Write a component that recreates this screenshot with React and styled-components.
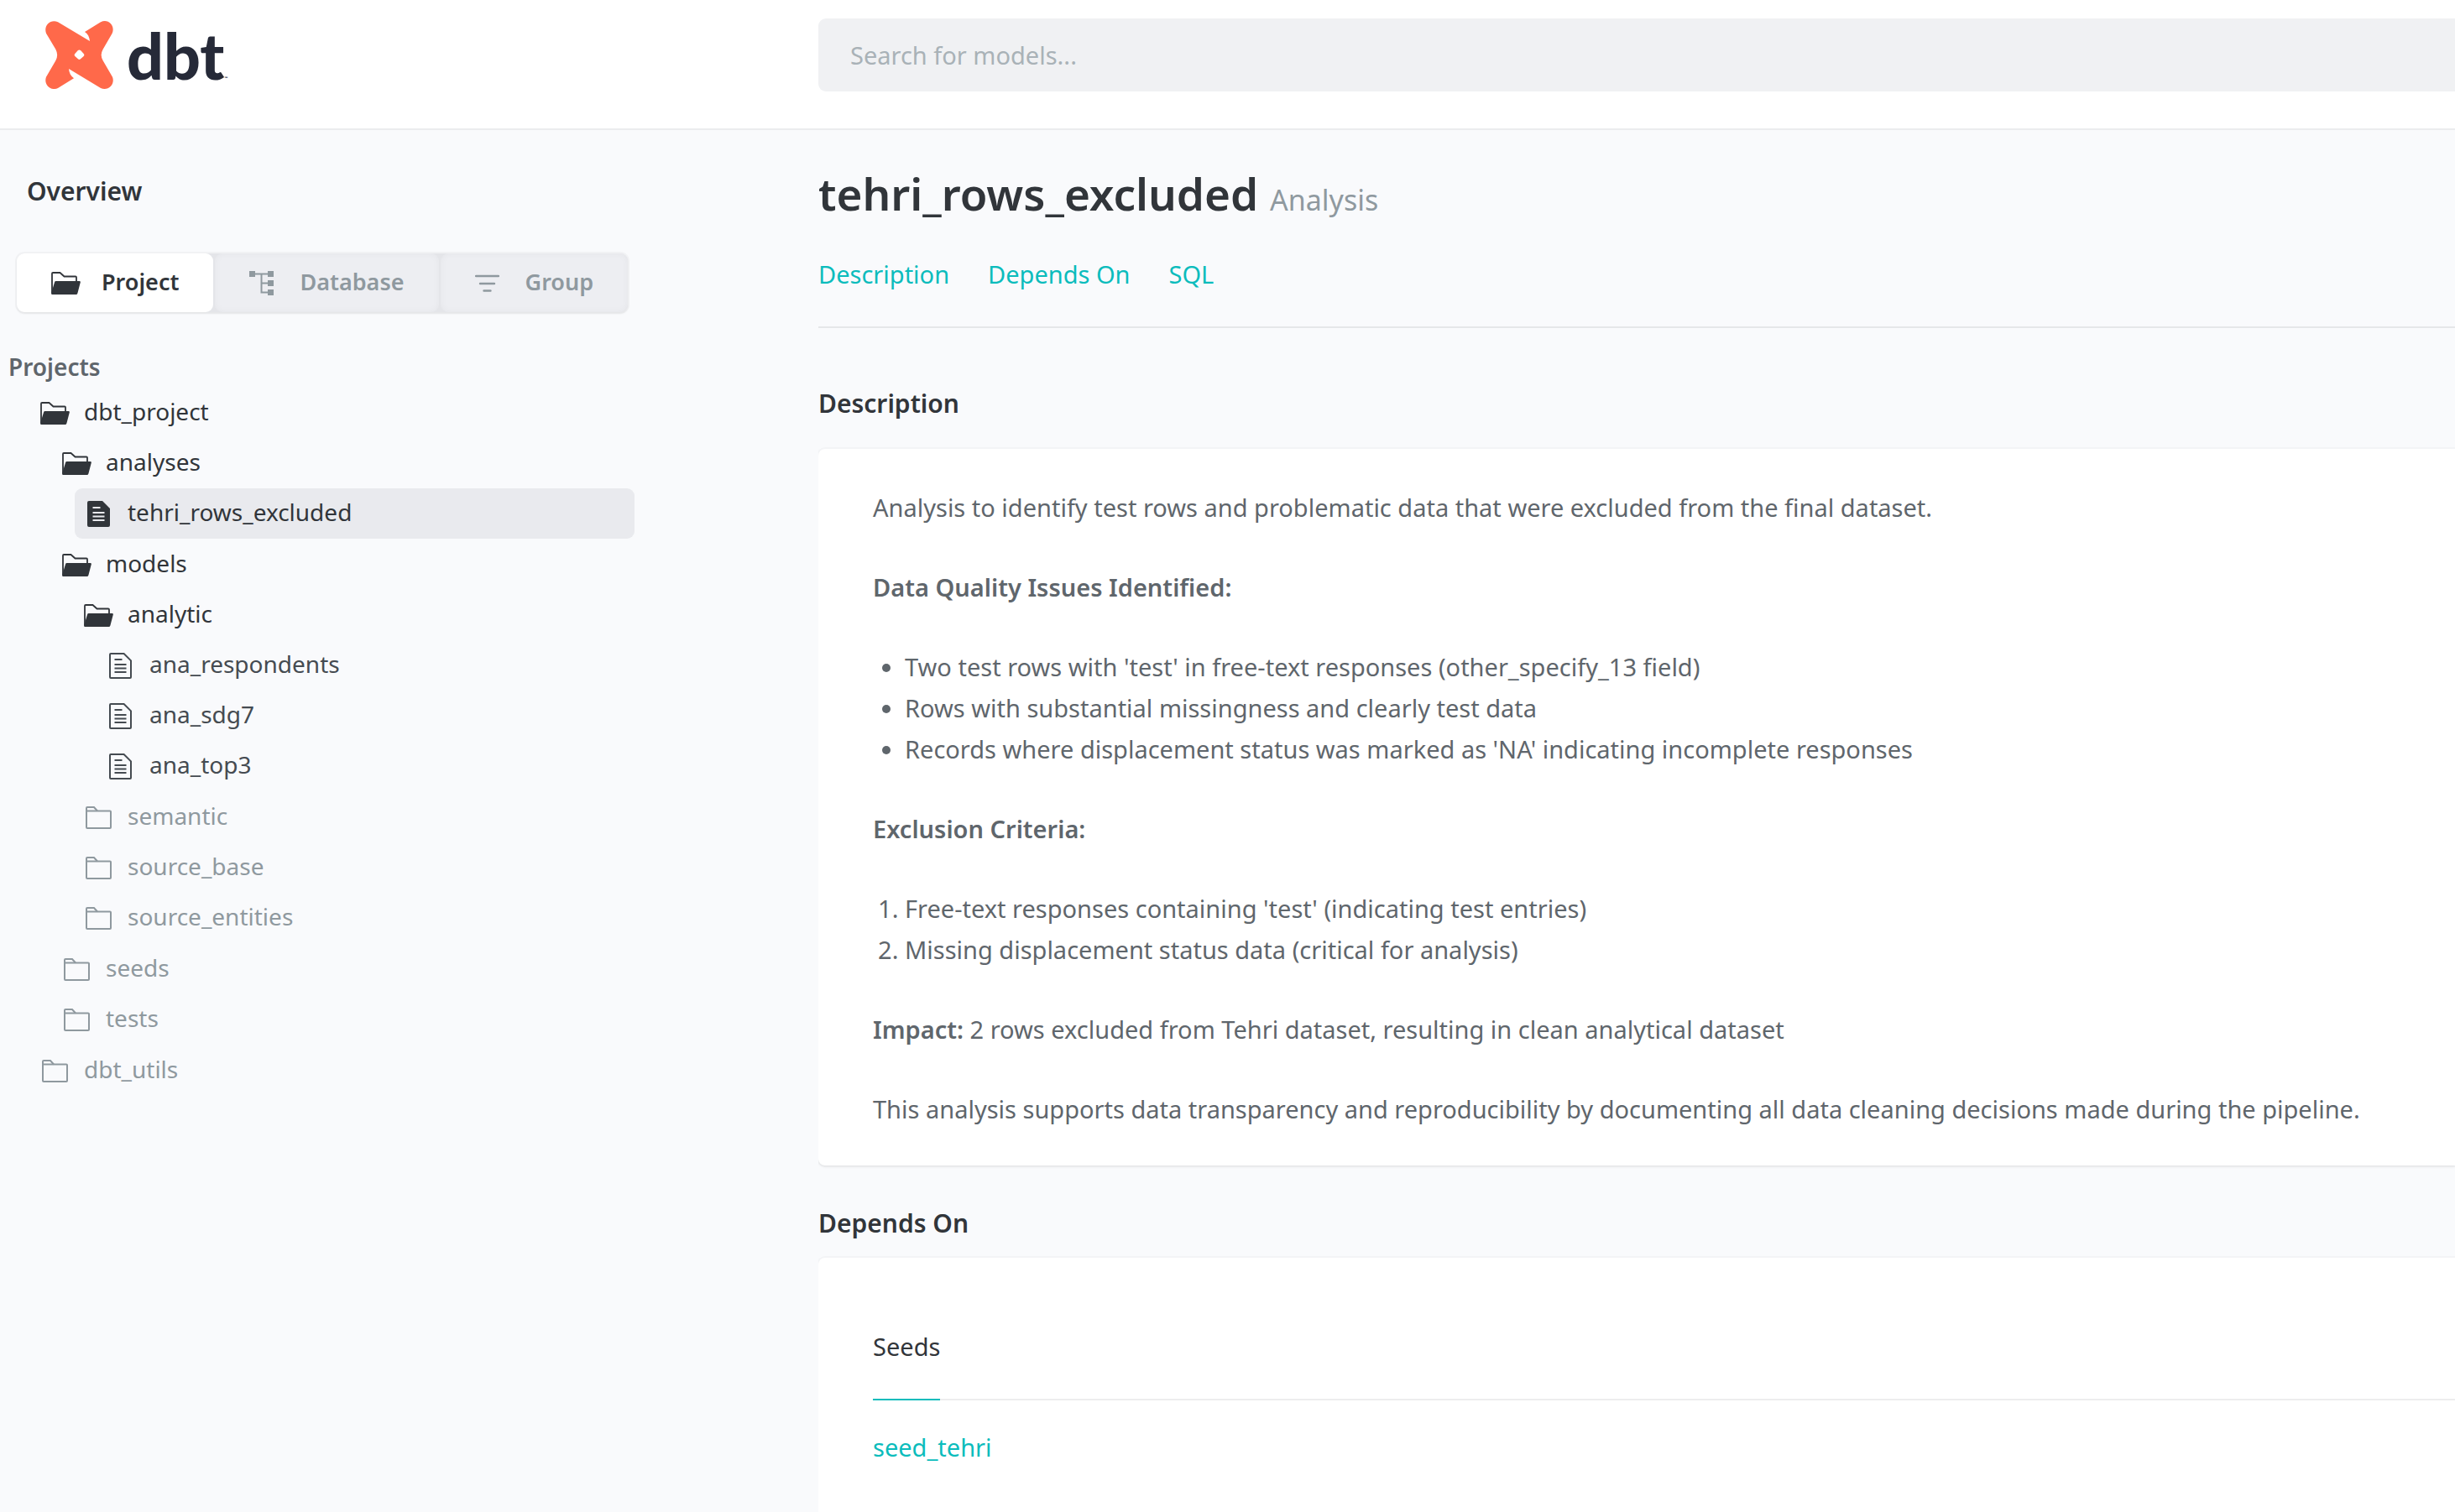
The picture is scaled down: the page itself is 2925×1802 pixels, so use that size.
import React from "react";
import styled, { createGlobalStyle } from "styled-components";

const color = {
  ink: "#31353a",
  body: "#5f666c",
  muted: "#8f999f",
  teal: "#0bbcbc",
  page: "#f9fafc",
  line: "#ebecee",
};

const GlobalStyle = createGlobalStyle`
  *, *::before, *::after { box-sizing: border-box; }
  body {
    margin: 0;
    background: ${color.page};
    color: ${color.body};
    font: 400 29px/49px "Noto Sans", "Open Sans", sans-serif;
  }
  h1, h2, h3, p, ul, ol { margin: 0; }
  a { color: ${color.teal}; text-decoration: none; }
  strong { font-weight: 600; }
`;

/* ---------- frame ---------- */

const Shell = styled.div`
  display: flex;
  flex-direction: column;
  height: 100vh;
  overflow: hidden;
`;

const Columns = styled.div`
  display: grid;
  grid-template-columns: minmax(0, 1fr) minmax(0, 2fr);
`;

const TopBar = styled(Columns).attrs({ as: "header" })`
  flex: none;
  height: 155px;
  background: #fff;
  border-bottom: 2px solid ${color.line};
`;

const Body = styled(Columns)`
  flex: 1;
  min-height: 0;
`;

const Brand = styled.a`
  display: flex;
  align-items: center;
  align-self: start;
  gap: 16px;
  height: 81px;
  margin: 25px 0 0 54px;
  color: #262a38;
`;

const Wordmark = styled.span`
  font: 900 77px/81px Lato, sans-serif;
  small {
    font-size: 5px;
    line-height: 1;
  }
`;

const Search = styled.input`
  width: 100%;
  height: 87px;
  margin-top: 22px;
  padding: 0 38px;
  border: 0;
  border-radius: 9px 0 0 9px;
  background: #f0f1f3;
  color: ${color.ink};
  font: 400 29px "Noto Sans", "Open Sans", sans-serif;
  &::placeholder {
    color: #a9b2b7;
    opacity: 1;
  }
`;

/* ---------- sidebar ---------- */

const Sidebar = styled.aside`
  padding-top: 48px;
  min-height: 0;
  overflow: hidden;
`;

const Overview = styled.a`
  display: block;
  padding-left: 32px;
  color: ${color.ink};
  font-size: 30px;
  font-weight: 600;
`;

const Tabs = styled.div`
  display: flex;
  width: max-content;
  margin: 50px 0 0 20px;
  border-radius: 9px;
  background: #e4e5e9;
  box-shadow: 0 0 0 2px rgba(0, 0, 0, 0.03), 0 2px 3px rgba(0, 0, 0, 0.05);
`;

const Tab = styled.button`
  display: flex;
  align-items: center;
  gap: 25px;
  height: 70px;
  padding: 0 41px;
  border: 0;
  border-radius: 9px;
  background: ${(p) => (p.$active ? "#fff" : "#edeef2")};
  box-shadow: ${(p) => (p.$active ? "none" : "inset 0 0 8px rgba(0, 0, 0, 0.04)")};
  color: ${(p) => (p.$active ? color.ink : color.muted)};
  font: 600 27px "Noto Sans", "Open Sans", sans-serif;
  & + & {
    margin-left: 2px;
  }
`;

const TabIcon = styled.span`
  display: flex;
  width: 35px;
`;

const Label = styled.span`
  padding-bottom: 4px;
`;

const TreeTitle = styled.h2`
  padding-left: 10px;
  margin-top: 41px;
  font-size: 28px;
  font-weight: 600;
`;

const TreeList = styled.ul`
  list-style: none;
  padding: 0 0 0 ${(p) => (p.$root ? 37 : 26)}px;
  margin-bottom: 1px;
`;

const TreeRow = styled.a`
  display: flex;
  align-items: center;
  gap: 17px;
  height: 60px;
  padding-left: 10px;
  border-radius: 9px;
  background: ${(p) => (p.$selected ? "#e9eaee" : "transparent")};
  color: ${(p) => p.$tone};
  font-size: 28px;
`;

const IconSlot = styled.span`
  display: flex;
  justify-content: center;
  width: 36px;
`;

const TreeNav = styled.nav`
  width: 756px;
  max-width: 100%;
`;

/* ---------- main ---------- */

const Main = styled.main`
  padding-top: 40px;
  min-height: 0;
  overflow: hidden;
`;

const Title = styled.h1`
  color: ${color.ink};
  font-size: 53px;
  font-weight: 600;
  line-height: 72px;
  small {
    color: ${color.muted};
    font-size: 34px;
    font-weight: 400;
    line-height: 1;
  }
`;

const Anchors = styled.nav`
  display: flex;
  gap: 46px;
  margin-top: 35px;
  padding-bottom: 38px;
  border-bottom: 2px solid #e5e7e9;
`;

const Section = styled.section`
  display: flex;
  flex-direction: column;
  gap: ${(p) => p.$gap}px;
  padding-top: ${(p) => p.$top}px;
`;

const SectionTitle = styled.h2`
  color: ${color.ink};
  font-size: 30px;
  font-weight: 600;
`;

const Card = styled.div`
  display: flex;
  flex-direction: column;
  gap: ${(p) => p.$gap}px;
  padding: ${(p) => p.$top}px 0 43px 65px;
  border-radius: 8px 0 0 8px;
  background: #fff;
  box-shadow: 0 0 0 2px rgba(0, 0, 0, 0.025), 0 2px 3px rgba(0, 0, 0, 0.06);
  ul, ol { padding-left: 38px; }
`;

const TabStrip = styled.div`
  display: flex;
  border-bottom: 2px solid #ededee;
`;

const StripTab = styled.button`
  padding: 0 0 38px;
  margin-bottom: -2px;
  border: 0;
  border-bottom: 2px solid ${color.teal};
  background: none;
  color: ${color.ink};
  font: inherit;
`;

/* ---------- drawings ---------- */

const Mark = () => (
  <svg width="81" height="81" viewBox="162 75 243 243" aria-hidden="true">
    <path
      fill="#ff694a"
      fillRule="evenodd"
      d="M207 79L321 147C320 133 314 121 303 114L360 79C386 65 413 92 401 119L368 176Q356 197 368 217L402 275C412 302 387 326 360 315L246 246C247 260 253 272 264 280L207 315C181 327 155 302 165 275L199 217Q210 197 199 176L165 119C155 92 180 67 207 79ZM278 181L268 192Q264 197 268 201L279 211Q283 215 288 211L299 201Q303 197 299 192L289 181Q283 176 278 181Z"
    />
  </svg>
);

const FolderOpen = () => (
  <svg width="35" height="27" viewBox="0 0 35 27" aria-hidden="true">
    <path d="M1 25V2Q1 1 2 1H10.5L15.5 5.5H29Q30 5.5 30 6.5V12" fill="none" stroke="currentColor" strokeWidth="1.8" />
    <path d="M5.6 11H33.5Q35.2 11 34.8 12.6L31.4 25.4Q31 27 29.6 27H1.4Q0 27 0 25.5L4 12.4Q4.4 11 5.6 11Z" fill="currentColor" />
  </svg>
);

const FolderClosed = () => (
  <svg width="31" height="27" viewBox="0 0 31 27" aria-hidden="true" fill="none" stroke="currentColor" strokeWidth="2">
    <path d="M1 5.5V2Q1 1 2 1H10L14 5.5" />
    <path d="M1 5.5H29Q30 5.5 30 6.5V25Q30 26 29 26H2Q1 26 1 25Z" />
  </svg>
);

const FileIcon = ({ solid }) => (
  <svg width="27" height="31" viewBox="0 0 27 31" aria-hidden="true">
    <path
      d="M2 1H17.6L26 9.4V29Q26 30 25 30H2Q1 30 1 29V2Q1 1 2 1Z"
      fill={solid ? "currentColor" : "none"}
      stroke="currentColor"
      strokeWidth="2"
    />
    <path d="M6.5 8H15.5M6.5 14H20.5M6.5 18.5H20.5M6.5 23H20.5" stroke={solid ? "#e9eaee" : "currentColor"} strokeWidth="2" />
  </svg>
);

const TreeIcon = () => (
  <svg width="29" height="29" viewBox="0 0 29 29" aria-hidden="true">
    <path d="M0 0H7V7H0ZM22 0H29V7H22ZM22 11H29V18H22ZM22 22H29V29H22Z" fill="currentColor" />
    <path d="M7 3.5H22M14.5 3.5V25.5H22M14.5 14.5H22" fill="none" stroke="currentColor" strokeWidth="2" />
  </svg>
);

const FilterIcon = () => (
  <svg width="29" height="29" viewBox="0 0 29 29" aria-hidden="true">
    <path d="M1 6H28M6 15H23M10.5 23.5H18.5" stroke="currentColor" strokeWidth="2.4" strokeLinecap="round" />
  </svg>
);

/* ---------- data ---------- */

const closed = (name) => ({ name, kind: "closed" });
const file = (name, selected) => ({ name, kind: "file", selected });
const open = (name, children) => ({ name, kind: "open", children });

const tree = [
  open("dbt_project", [
    open("analyses", [file("tehri_rows_excluded", true)]),
    open("models", [
      open("analytic", [file("ana_respondents"), file("ana_sdg7"), file("ana_top3")]),
      closed("semantic"),
      closed("source_base"),
      closed("source_entities"),
    ]),
    closed("seeds"),
    closed("tests"),
  ]),
  closed("dbt_utils"),
];

const tone = (n) => {
  if (n.kind === "closed") return color.muted;
  return n.kind === "open" || n.selected ? color.ink : "#454b51";
};

const NodeIcon = ({ node }) => {
  if (node.kind === "open") return <FolderOpen />;
  if (node.kind === "closed") return <FolderClosed />;
  return <FileIcon solid={node.selected} />;
};

const Tree = ({ nodes, root }) => (
  <TreeList $root={root}>
    {nodes.map((n) => (
      <li key={n.name}>
        <TreeRow href="#" $selected={n.selected} $tone={tone(n)}>
          <IconSlot>
            <NodeIcon node={n} />
          </IconSlot>
          <Label>{n.name}</Label>
        </TreeRow>
        {n.children && <Tree nodes={n.children} />}
      </li>
    ))}
  </TreeList>
);

const tabs = [
  { name: "Project", Icon: FolderOpen, active: true },
  { name: "Database", Icon: TreeIcon },
  { name: "Group", Icon: FilterIcon },
];

export default function App() {
  return (
    <Shell>
      <GlobalStyle />
      <TopBar>
        <Brand href="#" aria-label="dbt">
          <Mark />
          <Wordmark>
            dbt<small>™</small>
          </Wordmark>
        </Brand>
        <Search type="search" aria-label="Search for models" placeholder="Search for models..." />
      </TopBar>
      <Body>
        <Sidebar>
          <Overview href="#">Overview</Overview>
          <Tabs>
            {tabs.map(({ name, Icon, active }) => (
              <Tab key={name} type="button" $active={active} aria-pressed={!!active}>
                <TabIcon>
                  <Icon />
                </TabIcon>
                <Label>{name}</Label>
              </Tab>
            ))}
          </Tabs>
          <TreeTitle>Projects</TreeTitle>
          <TreeNav>
            <Tree nodes={tree} root />
          </TreeNav>
        </Sidebar>
        <Main>
          <Title>
            tehri_rows_excluded <small>Analysis</small>
          </Title>
          <Anchors>
            <a href="#description">Description</a>
            <a href="#depends-on">Depends On</a>
            <a href="#sql">SQL</a>
          </Anchors>
          <Section id="description" $top={65} $gap={30}>
            <SectionTitle>Description</SectionTitle>
            <Card $top={45} $gap={46}>
              <p>Analysis to identify test rows and problematic data that were excluded from the final dataset.</p>
              <p>
                <strong>Data Quality Issues Identified:</strong>
              </p>
              <ul>
                <li>Two test rows with 'test' in free-text responses (other_specify_13 field)</li>
                <li>Rows with substantial missingness and clearly test data</li>
                <li>Records where displacement status was marked as 'NA' indicating incomplete responses</li>
              </ul>
              <p>
                <strong>Exclusion Criteria:</strong>
              </p>
              <ol>
                <li>Free-text responses containing 'test' (indicating test entries)</li>
                <li>Missing displacement status data (critical for analysis)</li>
              </ol>
              <p>
                <strong>Impact:</strong> 2 rows excluded from Tehri dataset, resulting in clean analytical dataset
              </p>
              <p>
                This analysis supports data transparency and reproducibility by documenting all data cleaning decisions
                made during the pipeline.
              </p>
            </Card>
          </Section>
          <Section id="depends-on" $top={44} $gap={17}>
            <SectionTitle>Depends On</SectionTitle>
            <Card $top={81} $gap={31}>
              <TabStrip>
                <StripTab type="button">Seeds</StripTab>
              </TabStrip>
              <a href="#seed_tehri">seed_tehri</a>
              <p>&nbsp;</p>
            </Card>
          </Section>
        </Main>
      </Body>
    </Shell>
  );
}
